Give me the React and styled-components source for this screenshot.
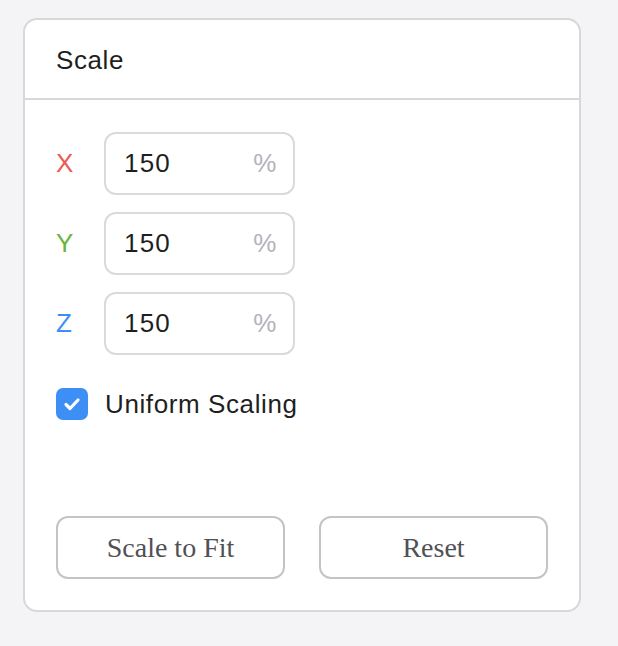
import React, { useState } from 'react';
import styled, { createGlobalStyle } from 'styled-components';

const GlobalStyle = createGlobalStyle`
  html, body {
    margin: 0;
    padding: 0;
    background: #f4f4f6;
  }
  body {
    font-family: "Liberation Sans", Arial, sans-serif;
    letter-spacing: 0.6px;
  }
`;

const Page = styled.div`
  padding: 18px 0 0 23px;
  min-height: 646px;
  box-sizing: border-box;
`;

const Card = styled.section`
  width: 558px;
  height: 594px;
  box-sizing: border-box;
  background: #fff;
  border: 2px solid #d8d8dc;
  border-radius: 14px;
  display: flex;
  flex-direction: column;
`;

const Header = styled.div`
  height: 80px;
  box-sizing: border-box;
  border-bottom: 2px solid #d8d8dc;
  padding: 2px 31px 0;
  display: flex;
  align-items: center;
  font-size: 26px;
  color: #1f1f22;
`;

const Body = styled.div`
  flex: 1;
  padding: 32px 31px 31px;
  display: flex;
  flex-direction: column;
`;

const Fields = styled.div`
  display: flex;
  flex-direction: column;
  gap: 17px;
`;

const Row = styled.label`
  display: flex;
  align-items: center;
`;

const Axis = styled.span`
  width: 48px;
  font-size: 26px;
  color: ${p => p.color};
`;

const InputBox = styled.div`
  width: 191px;
  height: 63px;
  box-sizing: border-box;
  border: 2px solid #dadadd;
  border-radius: 12px;
  display: flex;
  align-items: center;
  padding: 0 16px 0 18px;
`;

const NumberInput = styled.input`
  flex: 1;
  min-width: 0;
  border: none;
  outline: none;
  background: none;
  font-family: inherit;
  letter-spacing: 1.2px;
  font-size: 26px;
  color: #1f1f22;
  padding: 0;
`;

const Unit = styled.span`
  font-size: 26px;
  color: #b4b4b8;
`;

const CheckRow = styled.label`
  display: flex;
  align-items: center;
  gap: 17px;
  margin-top: 33px;
  font-size: 26px;
  color: #1f1f22;
  cursor: pointer;
`;

const CheckBox = styled.span`
  width: 32px;
  height: 32px;
  border-radius: 7px;
  background: ${p => (p.checked ? '#3d8ef5' : '#fff')};
  border: ${p => (p.checked ? 'none' : '2px solid #c8c8cc')};
  box-sizing: border-box;
  display: flex;
  align-items: center;
  justify-content: center;
`;

const Actions = styled.div`
  margin-top: auto;
  display: flex;
  gap: 34px;
`;

const Button = styled.button`
  width: 229px;
  height: 63px;
  background: #fff;
  border: 2px solid #c4c4c8;
  border-radius: 12px;
  font-family: "Liberation Serif", "Times New Roman", serif;
  font-size: 28px;
  letter-spacing: 0;
  color: #505055;
  cursor: pointer;
`;

const axes = [
  { key: 'x', label: 'X', color: '#ec5a55' },
  { key: 'y', label: 'Y', color: '#6bb43a' },
  { key: 'z', label: 'Z', color: '#3d8ef5' },
];

export default function App() {
  const [values, setValues] = useState({ x: 150, y: 150, z: 150 });
  const [uniform, setUniform] = useState(true);

  const update = (key, v) => {
    if (uniform) setValues({ x: v, y: v, z: v });
    else setValues(prev => ({ ...prev, [key]: v }));
  };

  return (
    <Page>
      <GlobalStyle />
      <Card>
        <Header>Scale</Header>
        <Body>
          <Fields>
            {axes.map(a => (
              <Row key={a.key}>
                <Axis color={a.color}>{a.label}</Axis>
                <InputBox>
                  <NumberInput
                    value={values[a.key]}
                    onChange={e => update(a.key, e.target.value)}
                  />
                  <Unit>%</Unit>
                </InputBox>
              </Row>
            ))}
          </Fields>
          <CheckRow onClick={() => setUniform(u => !u)}>
            <CheckBox checked={uniform}>
              {uniform && (
                <svg width="20" height="20" viewBox="0 0 20 20">
                  <path d="M4 10.5l4 4L16 6" fill="none" stroke="#fff" strokeWidth="3.2" strokeLinecap="round" strokeLinejoin="round" />
                </svg>
              )}
            </CheckBox>
            Uniform Scaling
          </CheckRow>
          <Actions>
            <Button type="button" onClick={() => setValues({ x: 150, y: 150, z: 150 })}>Scale to Fit</Button>
            <Button type="button" onClick={() => setValues({ x: 100, y: 100, z: 100 })}>Reset</Button>
          </Actions>
        </Body>
      </Card>
    </Page>
  );
}
